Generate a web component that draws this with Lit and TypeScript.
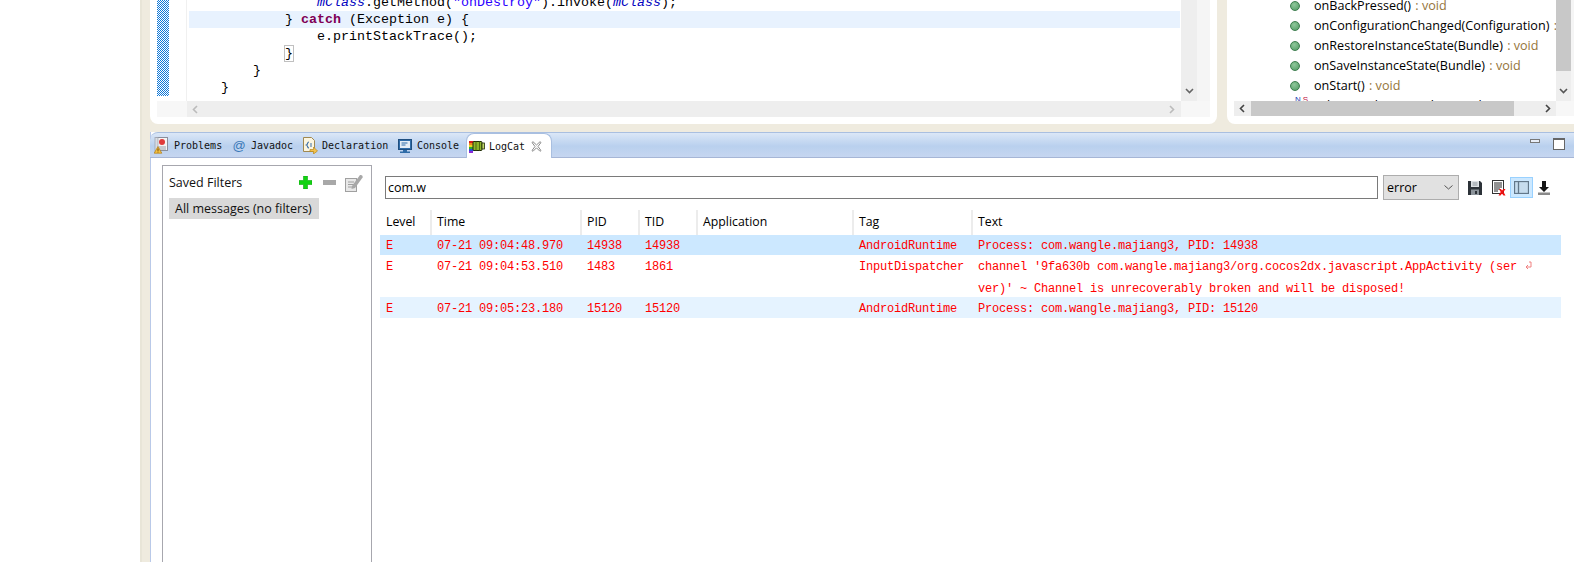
import { LitElement, html, css, svg } from "lit";
import { customElement } from "lit/decorators.js";

const icons = {
  problems: svg`<svg width="16" height="17" viewBox="0 0 16 17"><rect x="2.5" y="0.5" width="11" height="13" fill="#f4f4f4" stroke="#8a8f9c"/><rect x="1" y="0.5" width="3" height="14" fill="#d8dce4" stroke="#9aa0ac" stroke-width=".7"/><circle cx="8" cy="5" r="3" fill="#e03a3a"/><path d="M5 12h7M5 10h7" stroke="#9aa0ac"/><path d="M4 9.5L7.8 16.2H.2z" fill="#f6c343" stroke="#b07a10" stroke-width=".7"/><path d="M4 11.5v2.4M4 14.6v.8" stroke="#6b3f00"/></svg>`,
  at: html`<span class="at">@</span>`,
  decl: svg`<svg width="16" height="17" viewBox="0 0 16 17"><path d="M1.5.5h8l3 3v11h-11z" fill="#fbf5e0" stroke="#a08850"/><path d="M7 5c-2 0-1 2.500-2.500 3C6 8.500 5 11 7 11" fill="none" stroke="#3a6ea8" stroke-width="1.100"/><path d="M8 7h2M8 9h2" stroke="#3a6ea8"/><path d="M8 12.500h3.500V10l4 4-4 3v-2.500H8z" fill="#f2c14e" stroke="#b8881c" stroke-width=".7"/></svg>`,
  console: svg`<svg width="14" height="14" viewBox="0 0 14 14"><rect x=".5" y=".5" width="13" height="10" fill="#2f6ca8" stroke="#1f4f80"/><rect x="2" y="2" width="10" height="7" fill="#e6eef6"/><path d="M3.500 4h6M3.500 6h4" stroke="#2f6ca8"/><path d="M5 11h4v1.500h3V14H2v-1.500h3z" fill="#2f6ca8"/></svg>`,
  logcat: svg`<svg width="16" height="13" viewBox="0 0 16 13"><path d="M0 1h5v2H0z" fill="#d81e1e"/><path d="M0 3h5v2H0z" fill="#f28a1c"/><path d="M0 5h5v2H0z" fill="#e8d81e"/><path d="M0 7h5v2H0z" fill="#2ea82e"/><path d="M0 9h5v2H0z" fill="#2a50d8"/><path d="M0 11h4v2H0z" fill="#8a2ad8"/><rect x="4" y="1.500" width="9" height="9" rx="1" fill="#8fb52a" stroke="#1f2a08"/><path d="M7 1.500v9M10.500 1.500v9" stroke="#4d6b10"/><rect x="13" y="3" width="2.500" height="6" fill="#c2d86a" stroke="#1f2a08" stroke-width=".8"/></svg>`,
  close: svg`<svg width="11" height="11" viewBox="0 0 11 11"><path d="M1 1.500L2 .7 5.500 4 9 .7l1 .8L7 5.500l3 4-1 .8-3.500-3.500L2 10.300l-1-.8 3-4z" fill="#fff" stroke="#8c8c8c"/></svg>`,
  plus: svg`<svg width="13" height="13" viewBox="0 0 13 13"><path d="M4.500 0h4v4.500H13v4H8.500V13h-4V8.500H0v-4h4.500z" fill="#12d312" stroke="#0fa80f" stroke-width=".6"/></svg>`,
  minus: svg`<svg width="13" height="5" viewBox="0 0 13 5"><rect width="13" height="5" fill="#a8a8a8"/></svg>`,
  edit: svg`<svg width="18" height="18" viewBox="0 0 18 18"><rect x=".5" y="4.500" width="11" height="13" fill="#e8e8e8" stroke="#a0a0a0"/><path d="M3 8h6M3 10.500h6M3 13h6" stroke="#a0a0a0"/><path d="M7 12l8-11c2-.5 3 1 2.600 2.500L10 14l-3.500 1z" fill="#a8a8a8"/></svg>`,
  save: svg`<svg width="14" height="14" viewBox="0 0 14 14"><path d="M0 0h12l2 2v12H0z" fill="#2c3238"/><rect x="3" y="0" width="8" height="6" fill="#dfe3e6"/><path d="M4.500 2h5M4.500 4h5" stroke="#8b939a"/><rect x="3" y="8.500" width="8" height="5.500" fill="#8b939a"/><rect x="7" y="10" width="2" height="3" fill="#2c3238"/></svg>`,
  clear: svg`<svg width="14" height="16" viewBox="0 0 14 16"><rect x=".5" y=".5" width="11" height="13" fill="#fff" stroke="#333"/><path d="M2 3h8M2 5h8M2 7h8M2 9h6M2 11h4" stroke="#222"/><path d="M7 9l2 0 1 1.500L11.500 9 13.500 9l-2 3 2 3.500h-2L10 13.500 8.500 15.500h-2l2.200-3.500z" fill="#f01010"/></svg>`,
  toggle: svg`<svg width="15" height="13" viewBox="0 0 15 13"><rect x=".5" y=".5" width="14" height="12" fill="#c6dcee" stroke="#62778a" stroke-width="1.300"/><path d="M4.500 1v11" stroke="#62778a" stroke-width="1.300"/></svg>`,
  lock: svg`<svg width="14" height="14" viewBox="0 0 14 14"><path d="M5 0h4v6h3L7 11 2 6h3z" fill="#151515"/><rect x="1" y="11.500" width="12" height="2.500" fill="#8a8a8a"/></svg>`,
  down: svg`<svg width="9" height="6" viewBox="0 0 9 6"><path d="M1 1l3.500 3.500L8 1" fill="none" stroke="currentColor" stroke-width="1.600"/></svg>`,
  left: svg`<svg width="6" height="9" viewBox="0 0 6 9"><path d="M5 1L1.500 4.500 5 8" fill="none" stroke="currentColor" stroke-width="1.600"/></svg>`,
  right: svg`<svg width="6" height="9" viewBox="0 0 6 9"><path d="M1 1l3.500 3.500L1 8" fill="none" stroke="currentColor" stroke-width="1.600"/></svg>`,
  chev: svg`<svg width="9" height="5" viewBox="0 0 9 5"><path d="M.5.500l4 3.500 4-3.500" fill="none" stroke="#555"/></svg>`,
  wrap: svg`<svg width="7" height="10" viewBox="0 0 7 10"><path d="M4 1h2v5H1.500M3 4L1 6l2 2" fill="none" stroke="#f08080"/></svg>`,
};

const outline = [
  ["onBackPressed()", " : void"],
  ["onConfigurationChanged(Configuration)", " : void"],
  ["onRestoreInstanceState(Bundle)", " : void"],
  ["onSaveInstanceState(Bundle)", " : void"],
  ["onStart()", " : void"],
];

const tabs = [
  ["Problems", icons.problems],
  ["Javadoc", icons.at],
  ["Declaration", icons.decl],
  ["Console", icons.console],
];

const columns = ["Level", "Time", "PID", "TID", "Application", "Tag", "Text"];

const rows = [
  { cls: "sel", time: "07-21 09:04:48.970", pid: "14938", tid: "14938", tag: "AndroidRuntime", text: ["Process: com.wangle.majiang3, PID: 14938"] },
  { cls: "two", time: "07-21 09:04:53.510", pid: "1483", tid: "1861", tag: "InputDispatcher", text: ["channel '9fa630b com.wangle.majiang3/org.cocos2dx.javascript.AppActivity (ser", "ver)' ~ Channel is unrecoverably broken and will be disposed!"] },
  { cls: "alt", time: "07-21 09:05:23.180", pid: "15120", tid: "15120", tag: "AndroidRuntime", text: ["Process: com.wangle.majiang3, PID: 15120"] },
];

@customElement("app-root")
export class AppRoot extends LitElement {
  static styles = css`
    :host { display: block; width: 1574px; height: 562px; overflow: hidden; background: #fff; font-family: "Open Sans", "Liberation Sans", sans-serif; }
    .shell { margin-left: 140px; height: 562px; background: #efebdf; padding-left: 10px; display: flex; flex-direction: column; gap: 8px; overflow: hidden; box-shadow: inset 2px 0 0 #e8e5d8; }
    .top { display: grid; grid-template-columns: 1067px 347px; column-gap: 10px; height: 124px; flex: none; }
    .card { background: #fff; overflow: hidden; display: grid; }
    .editor { border-radius: 0 0 8px 8px; padding: 0 7px 7px; grid-template-columns: 12px 18px 994px 16px 13px; grid-template-rows: 101px 16px; }
    .checker { height: 96px; background: repeating-conic-gradient(#1078d8 0 25%, #fff 0 50%) 0 0 / 2px 2px; }
    .gutter { border-right: 1px solid #f0f0f0; }
    .code { overflow: hidden; display: flex; flex-direction: column; justify-content: flex-end; padding-bottom: 5px; padding-left: 2px; font: 13.33px/17px "Liberation Mono", monospace; color: #000; }
    .code div { height: 17px; flex: none; white-space: pre; margin-right: 1px; }
    .code .hl { background: #e8f2fe; margin-left: 0; }
    .kw { color: #7f0055; font-weight: bold; }
    .str { color: #2a00ff; }
    .fld { color: #0000c0; font-style: italic; }
    .match { outline: 1px solid #c0c0c0; outline-offset: 0; }
    .vbar { background: #eee; display: flex; align-items: flex-end; justify-content: center; padding-bottom: 7px; color: #666; }
    .strip { background: #f5f5f5; }
    .hbar { background: #eee; display: flex; align-items: center; justify-content: space-between; padding: 0 6px 0 5px; color: #bbb; }
    .corner-l { grid-column: 1 / span 2; background: #f7f7f7; }
    .corner { grid-column: 4 / span 2; background: #f7f7f7; }
    .outline { border-radius: 0 0 0 8px; padding: 0 0 8px 7px; grid-template-columns: 322px 15px 3px; grid-template-rows: 101px 15px; }
    .tree { overflow: hidden; font-size: 12.6px; line-height: 20px; color: #000; }
    .tree ul { list-style: none; margin: -4px 0 0; padding: 0 0 0 56px; }
    .tree li { height: 20px; display: flex; align-items: center; white-space: nowrap; gap: 14px; margin-left: 0; }
    .dot { width: 8px; height: 8px; border-radius: 50%; background: radial-gradient(circle at 40% 35%, #8fc79b, #4f9a62); border: 0.5px solid #3c7d4e; flex: none; }
    .ret { color: #95743a; padding-left: 1px; }
    .field { color: #000; }
    .decor { width: 9px; flex: none; font: 8px/8px "Liberation Sans", sans-serif; white-space: nowrap; margin: -13px 0 0 0; transform: translateX(5px); }
    .decor b { font-weight: normal; color: #2040b0; }
    .decor b + b { color: #c01040; margin-left: 2px; }
    .vthumb { background: #eee; display: flex; flex-direction: column; justify-content: space-between; color: #555; align-items: center; padding-bottom: 7px; }
    .vthumb i { display: block; width: 15px; height: 71px; background: #c8c8c8; }
    .hthumb { background: #eee; display: flex; align-items: center; color: #444; padding: 0 5px; }
    .hthumb i { display: block; height: 15px; width: 263px; background: #c8c8c8; margin: 0 auto 0 6px; }
    .ocorner { grid-column: 2 / span 2; background: #f7f7f7; }

    .panel { flex: 1; background: #fff; border-left: 1px solid #b9c9e8; min-height: 0; display: flex; flex-direction: column; }
    .tabbar { height: 26px; flex: none; box-sizing: border-box; border-top: 1px solid #a9bfe0; border-bottom: 1px solid #a6b6d6; border-radius: 8px 0 0 0; background: linear-gradient(#dbe7f7, #b9d0ee 55%, #c6d6f0); display: flex; padding-left: 2px; align-items: stretch; margin-left: -1px; }
    .tabs { display: grid; grid-template-columns: 77px 71px 95px 71px 86px; }
    .tab { display: flex; align-items: center; font: 10px "DejaVu Sans Mono", monospace; color: #111; padding-top: 1px; }
    .tab .ic { width: 20px; margin-right: 2px; display: flex; justify-content: center; flex: none; }
    .at { color: #3a78b8; font: 13px "Liberation Sans", sans-serif; }
    .tab.active { background: #fff; border-radius: 8px 8px 0 0; border: 1px solid #a9bfe0; border-bottom: none; margin-bottom: -1px; box-sizing: border-box; }
    .tab.active .x { margin-left: 6px; display: flex; }
    .winctl { margin-left: auto; display: flex; align-items: center; gap: 13px; padding-right: 9px; padding-bottom: 2px; }
    .min { width: 10px; height: 4px; border: 1px solid #777; background: #e8eef8; box-sizing: border-box; margin-top: -6px; }
    .max { width: 10px; height: 9px; border: 1px solid #666; border-top-width: 2px; background: #fff; }
    .body { flex: 1; display: flex; padding-left: 11px; min-height: 0; }
    .filters { width: 210px; flex: none; box-sizing: border-box; margin-top: 7px; border: 1px solid #a7a7ae; border-bottom: none; padding: 6px 6px 0; font-size: 12.5px; color: #111; }
    .fhead { display: flex; align-items: center; height: 21px; margin-bottom: 5px; margin-top: 0; }
    .fhead .t { margin-right: auto; }
    .fhead svg { display: block; }
    .fhead .tools { display: flex; align-items: center; gap: 11px; margin-right: 2px; }
    .fhead .tools span:last-child { margin-left: -2px; }
    .fhead .tools span { display: flex; }
    .allmsg { background: #d9d9d9; width: 150px; height: 21px; line-height: 21px; padding-left: 6px; box-sizing: border-box; white-space: nowrap; margin-top: 3px; }
    .main { width: 1181px; margin-left: 8px; flex: none; }
    .toolbar { display: flex; align-items: center; height: 25px; margin-top: 17px; padding-left: 5px; }
    .search { width: 993px; height: 23px; box-sizing: border-box; border: 1px solid #7a7a7a; font-size: 12.5px; line-height: 21px; padding-left: 2px; color: #000; flex: none; }
    .combo { width: 76px; height: 25px; box-sizing: border-box; margin-left: 5px; background: #e1e1e1; border: 1px solid #adadad; display: flex; align-items: center; justify-content: space-between; padding: 0 5px 0 3px; font-size: 12.5px; color: #000; flex: none; }
    .ti { display: flex; flex: none; }
    .ti.save { margin-left: 9px; }
    .ti.clear { margin-left: 10px; }
    .ti.toggle { margin-left: 4px; width: 23px; height: 21px; box-sizing: border-box; background: #cce8ff; border: 1px solid #99d1ff; align-items: center; justify-content: center; }
    .ti.lock { margin-left: 4px; margin-top: 1px; }
    .grid { display: grid; grid-template-columns: 51px 150px 58px 58px 156px 119px 1fr; }
    .thead { height: 25px; margin-top: 10px; font-size: 12.3px; color: #000; grid-template-columns: 50px 150px 58px 58px 156px 119px 1fr; }
    .thead div { padding-left: 6px; line-height: 23px; border-left: 2px solid transparent; box-sizing: border-box; }
    .thead div:first-child { border-left: none; }
    .thead div + div { border-left-color: #ececec; padding-left: 5px; }
    .row { font: 12px/21px "Liberation Mono", monospace; letter-spacing: -0.2px; color: #f00; box-sizing: border-box; }
    .row div { padding-left: 6px; white-space: pre; }
    .row.sel { background: #cce8ff; height: 20px; padding-top: 1px; }
    .row.two { height: 42px; padding-top: 2px; }
    .row.alt { background: #e5f3ff; height: 21px; padding-top: 2px; }
    .row .wrap { margin-left: 8px; vertical-align: -1px; }
    .row .line { display: block; }
  `;

  private code() {
    return html`
      <div>                <span class="fld">mClass</span>.getMethod(<span class="str">"onDestroy"</span>).invoke(<span class="fld">mClass</span>);</div>
      <div class="hl">            } <span class="kw">catch</span> (Exception e) {</div>
      <div>                e.printStackTrace();</div>
      <div>            <span class="match">}</span></div>
      <div>        }</div>
      <div>    }</div>`;
  }

  render() {
    return html`<div class="shell">
      <div class="top">
        <div class="card editor">
          <div class="checker"></div>
          <div class="gutter"></div>
          <div class="code">${this.code()}</div>
          <div class="vbar">${icons.down}</div>
          <div class="strip"></div>
          <div class="corner-l"></div>
          <div class="hbar">${icons.left}${icons.right}</div>
          <div class="corner"></div>
        </div>
        <div class="card outline">
          <div class="tree"><ul>
            ${outline.map(([n, r]) => html`<li><span class="dot"></span><span>${n}<span class="ret">${r}</span></span></li>`)}
            <li><span class="decor"><b>N</b><b>S</b></span><span class="field">sClassLoader : DexClassLoader</span></li>
          </ul></div>
          <div class="vthumb"><i></i>${icons.down}</div>
          <div class="strip"></div>
          <div class="hthumb">${icons.left}<i></i>${icons.right}</div>
          <div class="ocorner"></div>
        </div>
      </div>
      <div class="panel">
        <div class="tabbar">
          <div class="tabs">
            ${tabs.map(([n, ic]) => html`<div class="tab"><span class="ic">${ic}</span>${n}</div>`)}
            <div class="tab active"><span class="ic">${icons.logcat}</span>LogCat<span class="x">${icons.close}</span></div>
          </div>
          <div class="winctl"><span class="min"></span><span class="max"></span></div>
        </div>
        <div class="body">
          <div class="filters">
            <div class="fhead"><span class="t">Saved Filters</span>
              <span class="tools"><span>${icons.plus}</span><span>${icons.minus}</span><span>${icons.edit}</span></span>
            </div>
            <div class="allmsg">All messages (no filters)</div>
          </div>
          <div class="main">
            <div class="toolbar">
              <div class="search">com.w</div>
              <div class="combo">error ${icons.chev}</div>
              <span class="ti save">${icons.save}</span>
              <span class="ti clear">${icons.clear}</span>
              <span class="ti toggle">${icons.toggle}</span>
              <span class="ti lock">${icons.lock}</span>
            </div>
            <div class="grid thead">${columns.map((c) => html`<div>${c}</div>`)}</div>
            ${rows.map((r) => html`<div class="grid row ${r.cls}">
              <div>E</div><div>${r.time}</div><div>${r.pid}</div><div>${r.tid}</div><div></div><div>${r.tag}</div>
              <div>${r.text.map((t, i) => html`<span class="line">${t}${r.text.length > 1 && i === 0 ? html`<span class="wrap">${icons.wrap}</span>` : ""}</span>`)}</div>
            </div>`)}
          </div>
        </div>
      </div>
    </div>`;
  }
}
